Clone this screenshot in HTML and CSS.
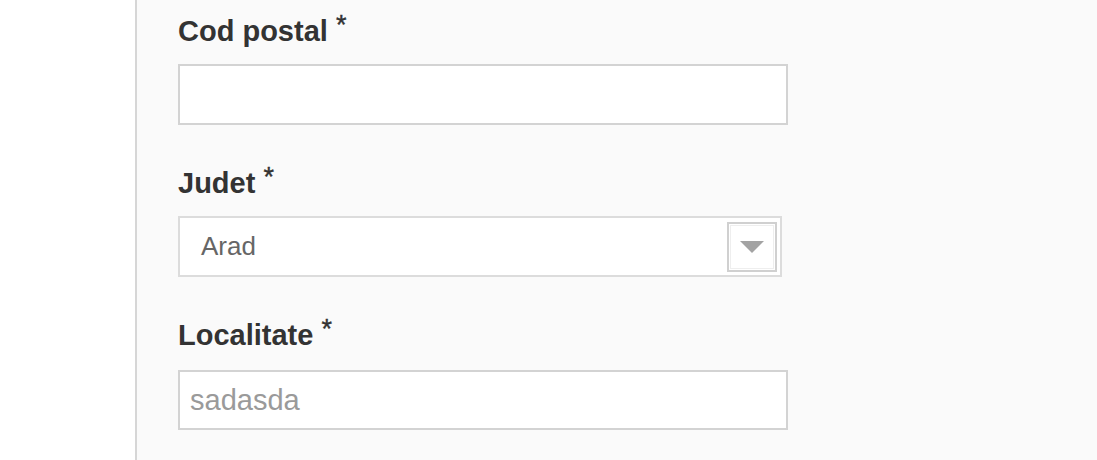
FILE: index.html
```html
<!DOCTYPE html>
<html lang="ro">
<head>
<meta charset="utf-8">
<title>Adresa</title>
<link rel="stylesheet" href="styles.css">
</head>
<body>
<div class="page">
  <div class="gutter"></div>
  <div class="panel">
    <div class="field">
      <div class="label">Cod postal <span class="req">*</span></div>
      <input class="input" type="text">
    </div>
    <div class="field">
      <div class="label">Judet <span class="req">*</span></div>
      <div class="select">
        <span class="select-value">Arad</span>
        <span class="select-arrow">
          <svg width="24" height="12" viewBox="0 0 24 12"><polygon points="0,0 24,0 12,12" fill="#a3a3a3"/></svg>
        </span>
      </div>
    </div>
    <div class="field field-last">
      <div class="label">Localitate <span class="req">*</span></div>
      <input class="input" type="text" placeholder="sadasda">
    </div>
  </div>
</div>
</body>
</html>
```
FILE: styles.css
```css
html, body {
  margin: 0;
  padding: 0;
  background: #ffffff;
  font-family: "Liberation Sans", Arial, sans-serif;
}
.page {
  display: flex;
  height: 460px;
  overflow: hidden;
}
.gutter {
  width: 135px;
  flex: none;
  background: #ffffff;
}
.panel {
  flex: 1;
  background: #fafafa;
  border-left: 2px solid #d6d6d6;
  padding-left: 41px;
  padding-top: 14px;
}
.field {
  margin-bottom: 41px;
}
.label {
  font-size: 29px;
  font-weight: bold;
  line-height: 34px;
  color: #333333;
  margin-bottom: 16px;
}
.field-last .label {
  margin-bottom: 18px;
}
.field-last .input {
  height: 60px;
}
.req {
  font-weight: normal;
  font-size: 27px;
  line-height: 0;
  vertical-align: 7px;
  -webkit-text-stroke: 0.4px #333333;
}
.input {
  display: block;
  box-sizing: border-box;
  width: 610px;
  height: 61px;
  margin: 0;
  border: 2px solid #d3d3d3;
  background: #ffffff;
  padding: 0 10px;
  font-family: "Liberation Sans", Arial, sans-serif;
  font-size: 29px;
  color: #555555;
  outline: none;
}
.input::placeholder {
  color: #9a9a9a;
  opacity: 1;
}
.select {
  box-sizing: border-box;
  width: 604px;
  height: 61px;
  border: 2px solid #dcdcdc;
  background: #ffffff;
  padding: 4px 3px 4px 21px;
  display: flex;
  align-items: center;
}
.select-value {
  font-size: 26px;
  color: #666666;
  flex: 1;
}
.select-arrow {
  box-sizing: border-box;
  width: 50px;
  height: 50px;
  border: 2px solid #d0d0d0;
  box-shadow: inset 0 0 0 1px #ffffff, inset 0 0 0 2px #eeeeee;
  background: #ffffff;
  display: flex;
  align-items: center;
  justify-content: center;
}
```
